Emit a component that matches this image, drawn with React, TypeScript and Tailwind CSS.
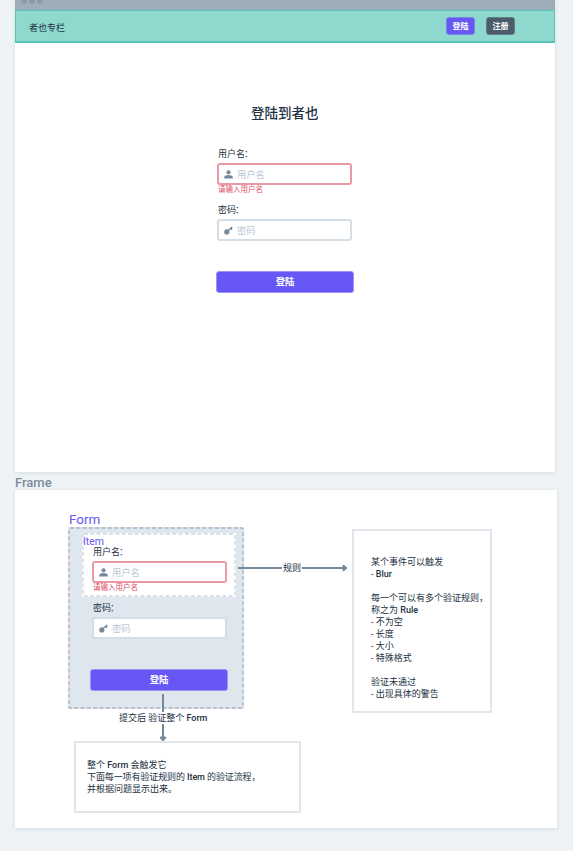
import React from "react";

function UserIcon() {
  return (
    <svg viewBox="0 0 11 11" className="size-[11px] shrink-0" fill="#76899a">
      <circle cx="5.500" cy="3.300" r="2.100" />
      <path d="M1.200 9.500V8.300c0-1.500 2.400-2.200 4.300-2.200s4.300.7 4.300 2.200v1.200z" />
    </svg>
  );
}

function KeyIcon() {
  return (
    <svg viewBox="0 0 11 11" className="size-[11px] shrink-0">
      <circle cx="3.800" cy="6.900" r="2.600" fill="#76899a" />
      <path d="M5.200 5.500L9 2M7.500 3.400L8.600 4.900M8.700 1.800V4.300" fill="none" stroke="#76899a" strokeWidth="1.200" />
    </svg>
  );
}

function Input({ icon, text, error }: { icon: React.ReactNode; text: string; error?: boolean }) {
  return (
    <div
      className={`ml-px flex h-[22px] w-[135px] items-center rounded-[3px] border-2 bg-white pl-[4px] text-[9.300px] text-[#b9c9d7] ${
        error ? "border-[#e998a4]" : "border-[#d5dee5]"
      }`}
    >
      {icon}
      <span className="ml-[3px] mt-px leading-[12px]">{text}</span>
    </div>
  );
}

function LoginForm({ inDiagram }: { inDiagram?: boolean }) {
  return (
    <div className="flex w-[138px] flex-col">
      <label className="ml-[2px] h-[15px] text-[9px] leading-[12px]">
        用户名<span className="-ml-px">：</span>
      </label>
      <Input icon={<UserIcon />} text="用户名" error />
      <div className="ml-[2px] h-[19px] text-[7.500px] leading-[9px] text-[#dc4c64]">请输入用户名</div>
      <label className="ml-[2px] h-[15px] text-[9px] leading-[12px]">
        密码<span className="-ml-px">：</span>
      </label>
      <Input icon={<KeyIcon />} text="密码" />
      <button
        className={`mt-[30px] h-[22px] w-[138px] rounded-[3px] border border-[#9d93f7] bg-[#6757f5] text-[9.300px] font-bold leading-[20px] text-white ${
          inDiagram ? "-ml-px" : ""
        }`}
      >
        登陆
      </button>
    </div>
  );
}

function DashedOutline({ width, height, color }: { width: number; height: number; color: string }) {
  return (
    <svg className="absolute inset-0" width={width} height={height}>
      <rect
        x="1"
        y="1"
        width={width - 2}
        height={height - 2}
        rx="1"
        fill="none"
        stroke={color}
        strokeWidth="1.300"
        strokeDasharray="4 2.300"
      />
    </svg>
  );
}

const notes: React.ReactNode[] = [
  "某个事件可以触发",
  <>- <b className="font-medium">Blur</b></>,
  "",
  "每一个可以有多个验证规则，",
  <>称之为 <b className="font-medium">Rule</b></>,
  "- 不为空",
  "- 长度",
  "- 大小",
  "- 特殊格式",
  "",
  "验证未通过",
  "- 出现具体的警告",
];

export default function App() {
  return (
    <div className="h-[851px] w-[573px] overflow-hidden bg-[#eff3f6] pl-[15px] font-['Roboto','Noto_Sans_CJK_SC',sans-serif] text-[#22313f]">
      <section className="flex h-[472px] w-[540px] flex-col bg-white shadow-[0_1px_4px_rgba(60,80,100,0.14)]">
        <div className="flex h-[10px] gap-[2px] overflow-hidden bg-[#9eadba] pl-[6px]">
          <i className="-mt-[2px] size-[6px] rounded-full bg-[#8a9bab]" />
          <i className="-mt-[2px] size-[6px] rounded-full bg-[#8a9bab]" />
          <i className="-mt-[2px] size-[6px] rounded-full bg-[#8a9bab]" />
        </div>
        <header className="flex h-[33px] items-start border border-b-2 border-[#58c4b7] bg-[#8ed8ce] pl-[13px] pr-[39px]">
          <span className="mt-[11px] text-[9px] leading-[12px]">者也专栏</span>
          <div className="ml-auto mt-[6px] flex gap-[11px] text-[8px] font-bold text-white">
            <button className="h-[18px] w-[29px] rounded-[3px] border border-[#7a86e8] bg-[#6757f5] leading-[17px]">登陆</button>
            <button className="h-[18px] w-[29px] rounded-[3px] border border-[#627d85] bg-[#4b5c6b] leading-[17px]">注册</button>
          </div>
        </header>
        <h1 className="mt-[60px] pl-[236px] text-[13.500px] font-medium leading-[20px]">登陆到者也</h1>
        <div className="ml-[201px] mt-[25px]">
          <LoginForm />
        </div>
      </section>

      <h2 className="h-[18px] text-[13px] font-medium leading-[21px] text-[#7b8d9b]">Frame</h2>

      <section className="relative h-[338px] w-[542px] bg-white shadow-[0_1px_4px_rgba(60,80,100,0.14)]">
        <span className="absolute left-[54px] top-[20px] text-[13.500px] leading-[18px] text-[#6757f5]">Form</span>
        <div className="absolute left-[53px] top-[37px] h-[182px] w-[176px] bg-[#dfe6ee]">
          <DashedOutline width={176} height={182} color="#a9b5c0" />
          <div className="absolute left-[14px] top-[6px] h-[64px] w-[154px] bg-white">
            <DashedOutline width={154} height={64} color="#cdd6de" />
            <span className="absolute left-[1px] top-[3px] text-[10.500px] leading-[12px] text-[#6757f5]">Item</span>
          </div>
          <div className="relative pl-[23px] pt-[19px]">
            <LoginForm inDiagram />
          </div>
        </div>

        <svg className="absolute inset-0" width="542" height="338" fill="#76899a" stroke="#76899a" strokeWidth="2">
          <path d="M223 78H330" />
          <path d="M328.500 75.800l2.700 2.200-2.700 2.200z" strokeLinejoin="round" />
          <path d="M148 204V249" />
          <path d="M145.800 247.500l2.200 2.700 2.200-2.700z" strokeLinejoin="round" />
        </svg>
        <span className="absolute left-[267px] top-[72px] bg-white px-[1px] text-[9px] leading-[12px]">规则</span>
        <span className="absolute left-[103px] top-[222px] whitespace-nowrap bg-white px-[1px] text-[9px] leading-[12px]">
          提交后 验证整个 <span className="font-medium">Form</span>
        </span>

        <div className="absolute left-[337px] top-[39px] h-[184px] w-[140px] border-2 border-[#e1e6ed] bg-white pl-[17px] pt-[25px] text-[9px] leading-[12px]">
          {notes.map((line, i) => (
            <p key={i} className="h-[12px] whitespace-nowrap">
              {line}
            </p>
          ))}
        </div>

        <div className="absolute left-[59px] top-[251px] h-[72px] w-[227px] border-2 border-[#e1e6ed] bg-white pl-[11px] pt-[16px] text-[9px] leading-[12px]">
          <p>
            整个 <span className="font-medium">Form</span> 会触发它
          </p>
          <p className="whitespace-nowrap tracking-[-0.100px]">
            下面每一项有验证规则的 <span className="font-medium">Item</span> 的验证流程，
          </p>
          <p>并根据问题显示出来。</p>
        </div>
      </section>
    </div>
  );
}
